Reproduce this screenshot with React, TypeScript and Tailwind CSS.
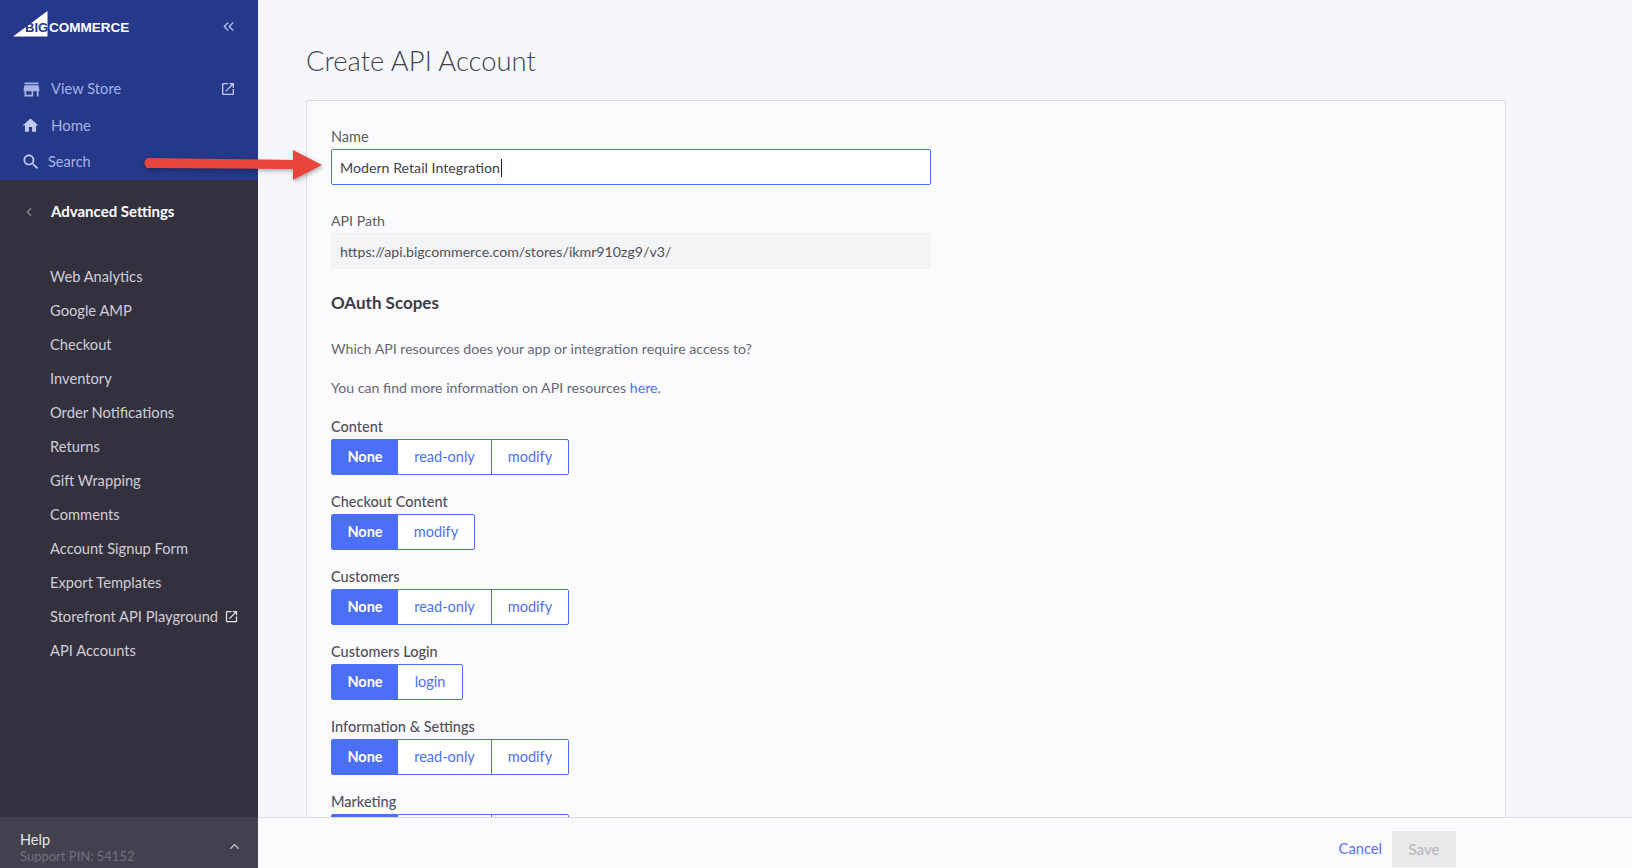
import React from "react";
import { ChevronLeft, ChevronUp, ChevronsLeft } from "lucide-react";

const P = {
  store: "M20 4H4v2h16V4zm1 10v-2l-1-5H4l-1 5v2h1v6h10v-6h4v6h2v-6h1zm-9 4H6v-4h6v4z",
  home: "M10 20v-6h4v6h5v-8h3L12 3 2 12h3v8z",
  search: "M15.5 14h-.79l-.28-.27C15.41 12.59 16 11.11 16 9.5 16 5.91 13.09 3 9.5 3S3 5.91 3 9.5 5.91 16 9.5 16c1.61 0 3.09-.59 4.23-1.57l.27.28v.79l5 4.99L20.49 19l-4.99-5zm-6 0C7.01 14 5 11.99 5 9.5S7.01 5 9.5 5 14 7.01 14 9.5 11.99 14 9.5 14z",
  open: "M19 19H5V5h7V3H5c-1.11 0-2 .9-2 2v14c0 1.1.89 2 2 2h14c1.1 0 2-.9 2-2v-7h-2v7zM14 3v2h3.59l-9.83 9.83 1.41 1.41L19 6.41V10h2V3h-7z",
};

function Icon({ d, className }: { d: string; className: string }) {
  return (
    <svg viewBox="0 0 24 24" fill="currentColor" className={className}>
      <path d={d} />
    </svg>
  );
}

const menu = [
  "Web Analytics",
  "Google AMP",
  "Checkout",
  "Inventory",
  "Order Notifications",
  "Returns",
  "Gift Wrapping",
  "Comments",
  "Account Signup Form",
  "Export Templates",
  "Storefront API Playground",
  "API Accounts",
];

const scopes: { name: string; opts: string[] }[] = [
  { name: "Content", opts: ["read-only", "modify"] },
  { name: "Checkout Content", opts: ["modify"] },
  { name: "Customers", opts: ["read-only", "modify"] },
  { name: "Customers Login", opts: ["login"] },
  { name: "Information & Settings", opts: ["read-only", "modify"] },
  { name: "Marketing", opts: ["read-only", "modify"] },
];

function Scope({ name, opts }: { name: string; opts: string[] }) {
  return (
    <div className="h-[75px] shrink-0">
      <div className="h-[17px] text-[14.5px] leading-[17px] font-medium text-[#50505a]">{name}</div>
      <div className="mt-[4px] inline-flex h-[36px] rounded-[2px] border border-[#4b70f5] bg-white text-[14.5px]">
        <span className="flex w-[66px] items-center justify-center bg-[#4b70f5] font-bold text-white">None</span>
        {opts.map((o, i) => (
          <span
            key={o}
            className={
              o === "read-only"
                ? "flex w-[93px] items-center justify-center text-[#4b70f5]"
                : o === "login"
                ? "flex w-[64px] items-center justify-center text-[#4b70f5]"
                : i === 1
                ? "flex w-[77px] items-center justify-center border-l border-[#4b70f5] text-[#4b70f5]"
                : "flex w-[76px] items-center justify-center text-[#4b70f5]"
            }
          >
            {o}
          </span>
        ))}
      </div>
    </div>
  );
}

export default function App() {
  return (
    <div className="relative flex h-[868px] w-[1632px] overflow-hidden bg-[#f6f7fc] font-['Lato',sans-serif]">
      <aside className="flex w-[258px] shrink-0 flex-col bg-[#34313f]">
        <div className="h-[180px] shrink-0 bg-[#253889]">
          <div className="flex h-[71px] items-start justify-between pl-[13px] pr-[21px] pt-[11px]">
            <div className="relative h-[26px] w-[116px]">
              <svg viewBox="0 0 35 26" className="absolute left-0 top-0 h-[26px] w-[35px]">
                <polygon points="0,25.5 34.5,0 34.5,25.5" fill="#ffffff" />
              </svg>
              <span className="absolute left-[12px] top-[9px] font-['Liberation_Sans',sans-serif] text-[13px] font-bold leading-[16px] text-[#253889]">BIG</span>
              <span className="absolute left-[36px] top-[9px] font-['Liberation_Sans',sans-serif] text-[13.5px] font-bold leading-[16px] text-white">COMMERCE</span>
            </div>
            <ChevronsLeft className="mt-[7px] h-[17px] w-[17px] text-[#b4bfec]" strokeWidth={2} />
          </div>
          <div className="flex h-[36px] items-center pl-[21px] pr-[22px] text-[14.5px] tracking-[0.1px] text-[#a6b3e8]">
            <Icon d={P.store} className="h-[21px] w-[21px]" />
            <span className="ml-[9px] flex-1">View Store</span>
            <Icon d={P.open} className="h-[16px] w-[16px] text-[#c1caf0]" />
          </div>
          <div className="flex h-[36px] items-center pl-[21px] text-[15px] text-[#a6b3e8]">
            <Icon d={P.home} className="h-[19px] w-[19px] text-[#c1caf0]" />
            <span className="ml-[11px]">Home</span>
          </div>
          <div className="flex h-[37px] items-center pl-[21px] text-[14.5px] text-[#a6b3e8]">
            <Icon d={P.search} className="h-[20px] w-[20px] text-[#c1caf0]" />
            <span className="ml-[7px]">Search</span>
          </div>
        </div>

        <div className="flex h-[64px] shrink-0 items-center pb-[1px] pl-[22px]">
          <ChevronLeft className="h-[14px] w-[14px] text-[#8d8b96]" />
          <span className="ml-[15px] text-[15px] font-bold text-white">Advanced Settings</span>
        </div>

        <nav className="mt-[15px] flex flex-1 flex-col pl-[50px] text-[14.7px] text-[#cfced6]">
          {menu.map((m) => (
            <div key={m} className="flex h-[34px] shrink-0 items-center">
              {m}
              {m.startsWith("Storefront") && <Icon d={P.open} className="ml-[6px] h-[15px] w-[15px] text-[#e2e1e6]" />}
            </div>
          ))}
        </nav>

        <div className="flex h-[51px] shrink-0 items-start justify-between bg-[#43414e] pl-[20px] pr-[16px] pt-[14px]">
          <div>
            <div className="text-[14.5px] leading-[17px] text-[#e6e5ea]">Help</div>
            <div className="text-[13px] leading-[16px] text-[#72707d]">Support PIN: 54152</div>
          </div>
          <ChevronUp className="mt-[8px] h-[15px] w-[15px] text-[#d5d4da]" />
        </div>
      </aside>

      <main className="flex min-w-0 flex-1 flex-col">
        <div className="min-h-0 flex-1 overflow-hidden pl-[48px] pr-[126px]">
          <h1 className="flex h-[100px] items-center pt-[22px] text-[27.4px] font-light text-[#41414b]">Create API Account</h1>
          <section className="h-[800px] border border-[#d8dbe8] bg-[#fbfbfe] pl-[24px] pt-[27px]">
            <div className="h-[21px] text-[14.5px] leading-[18px] text-[#5c5c66]">Name</div>
            <div className="flex h-[36px] w-[600px] items-center rounded-[2px] border border-[#4b70f5] bg-white pl-[8px] pt-[1px] text-[14.2px] text-[#41414b]">
              Modern Retail Integration
              <span className="ml-[1px] h-[18px] w-px bg-[#222]" />
            </div>
            <div className="mt-[27px] h-[21px] text-[14.2px] leading-[18px] text-[#5c5c66]">API Path</div>
            <div className="flex h-[36px] w-[600px] items-center rounded-[2px] border border-[#f0f1f3] bg-[#f3f4f5] pl-[8px] pt-[1px] text-[14.2px] text-[#50505a]">
              https://api.bigcommerce.com/stores/ikmr910zg9/v3/
            </div>
            <h2 className="mt-[22px] h-[24px] text-[17px] font-bold leading-[24px] text-[#3c3c46]">OAuth Scopes</h2>
            <p className="mt-[23px] h-[22px] text-[14.15px] leading-[22px] text-[#686872]">Which API resources does your app or integration require access to?</p>
            <p className="mt-[17px] h-[22px] text-[14.15px] leading-[22px] text-[#686872]">
              You can find more information on API resources <span className="text-[#4b70f5]">here</span>.
            </p>
            <div className="mt-[19px] flex flex-col">
              {scopes.map((s) => (
                <Scope key={s.name} name={s.name} opts={s.opts} />
              ))}
            </div>
          </section>
        </div>
        <footer className="flex h-[51px] shrink-0 items-start justify-end border-t border-[#d8dbe8] bg-[#fbfbfe] pr-[176px] pt-[13px]">
          <span className="mt-[7px] text-[14.7px] leading-[20px] text-[#5a6ff5]">Cancel</span>
          <span className="ml-[10px] flex h-[36px] w-[64px] items-center justify-center bg-[#e8e9ea] text-[15px] font-medium text-[#b8b9bb]">Save</span>
        </footer>
      </main>

      <svg className="pointer-events-none absolute left-[138px] top-[145px] h-[42px] w-[192px]" viewBox="0 0 192 42" style={{ filter: "drop-shadow(1px 2px 2px rgba(0,0,0,0.3))" }}>
        <path d="M9 13 L155 15 L155 5 L184 20 L155 35 L155 24 L9 23 Q4 18 9 13 Z" fill="#e8463d" />
      </svg>
    </div>
  );
}
